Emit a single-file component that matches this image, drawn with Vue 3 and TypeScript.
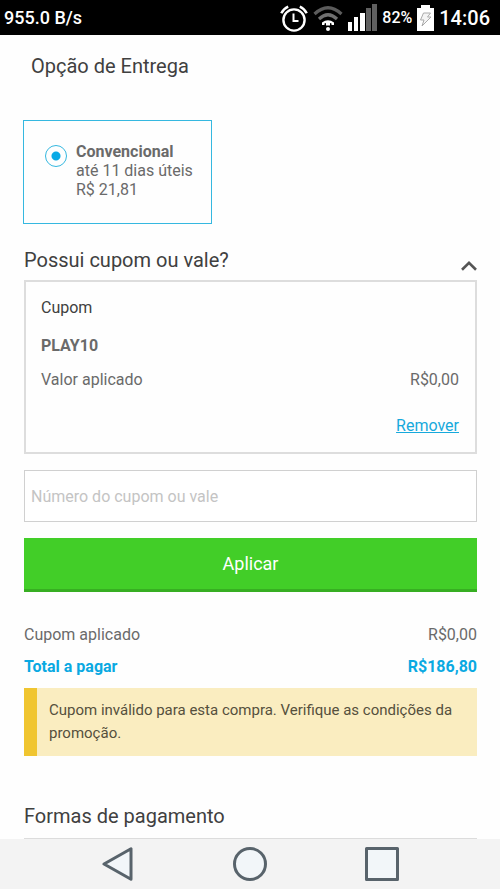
<script setup lang="ts">
import { ref } from 'vue'

const transferRate = '955.0 B/s'
const battery = '82%'
const clock = '14:06'

const delivery = ref('convencional')
const couponOpen = ref(true)
const applied = ref<{ code: string; value: string } | null>({ code: 'PLAY10', value: 'R$0,00' })
const couponInput = ref('')
</script>

<template>
  <div class="screen">
    <header class="status">
      <span class="rate">{{ transferRate }}</span>
      <div class="indicators">
        <svg class="alarm" width="28" height="28" viewBox="0 0 28 28" fill="none" stroke="#fff" aria-hidden="true">
          <circle cx="14" cy="16" r="10.6" stroke-width="2.4" />
          <path d="M13.5 9.5v7.500h5" stroke-width="2" />
          <path d="M1.3 9.200Q3.5 4.600 8.2 2.600M26.7 9.200Q24.5 4.600 19.8 2.600" stroke-width="2.5" />
        </svg>
        <svg class="wifi" width="30" height="26" viewBox="0 0 30 26" fill="none" aria-hidden="true">
          <path d="M1.5 9Q15-3.500 28.5 9" stroke="#5c5c5c" stroke-width="3.2" />
          <path d="M6 14Q15 5.500 24 14" stroke="#707070" stroke-width="3.2" />
          <path d="M9 17.500Q15 13 21 17.500V20h-2.500v-1.500L17 18v2.500h-4V18l-1.500.5V20H9z" fill="#fff" />
          <circle cx="15" cy="24" r="2" fill="#fff" />
        </svg>
        <svg class="signal" width="29" height="27" viewBox="0 0 29 27" aria-hidden="true">
          <path d="M0 18h4v9H0zM6 13h4v14H6zM12 9h5v18h-5z" fill="#fff" />
          <path d="M18 4h5v23h-5zM24 0h5v27h-5z" fill="#606060" />
        </svg>
        <span class="battery-level">{{ battery }}</span>
        <svg class="battery" width="17" height="26" viewBox="0 0 17 26" aria-hidden="true">
          <path d="M4 0h9v3h4v23H0V3h4z" fill="#fff" />
          <path d="M6.5 8h7l-3 4h3.500L5 21l2-6H3.500z" fill="#f4f4f4" stroke="#aaa" />
        </svg>
        <span class="clock">{{ clock }}</span>
      </div>
    </header>

    <main class="content">
      <section class="delivery">
        <h2 class="title inset">Opção de Entrega</h2>
        <label class="option">
          <input v-model="delivery" class="radio" type="radio" name="entrega" value="convencional" />
          <span class="option-text">
            <strong>Convencional</strong>
            <span>até 11 dias úteis</span>
            <span>R$ 21,81</span>
          </span>
        </label>
      </section>

      <section class="coupon">
        <div class="coupon-head">
          <h2 class="title">Possui cupom ou vale?</h2>
          <button class="toggle" type="button" aria-label="Cupom ou vale" :aria-expanded="couponOpen" @click="couponOpen = !couponOpen">
            <svg width="16" height="10" viewBox="0 0 16 10" fill="none" stroke="#555" stroke-width="2.6" aria-hidden="true">
              <path d="M1 8.8L8 1.9l7 6.9" />
            </svg>
          </button>
        </div>
        <template v-if="couponOpen">
          <div v-if="applied" class="applied">
            <h3 class="applied-title">Cupom</h3>
            <strong class="code">{{ applied.code }}</strong>
            <div class="row">
              <span>Valor aplicado</span>
              <span>{{ applied.value }}</span>
            </div>
            <a class="remove" href="#" @click.prevent="applied = null">Remover</a>
          </div>
          <form class="coupon-form" @submit.prevent>
            <input v-model="couponInput" class="field" type="text" aria-label="Número do cupom ou vale" placeholder="Número do cupom ou vale" />
            <button class="apply" type="submit">Aplicar</button>
          </form>
        </template>
      </section>

      <section class="summary">
        <div class="row">
          <span>Cupom aplicado</span>
          <span>R$0,00</span>
        </div>
        <div class="row total">
          <span>Total a pagar</span>
          <span>R$186,80</span>
        </div>
        <p class="warning" role="alert">Cupom inválido para esta compra. Verifique as condições da promoção.</p>
      </section>

      <section class="payment">
        <h2 class="title">Formas de pagamento</h2>
      </section>
    </main>

    <nav class="system-nav">
      <button type="button" aria-label="Voltar">
        <svg width="34" height="34" viewBox="0 0 34 34"><path d="M3 17L30 1.7v30.6z" /></svg>
      </button>
      <button type="button" aria-label="Início">
        <svg width="34" height="34" viewBox="0 0 34 34"><circle cx="17" cy="17" r="15.5" /></svg>
      </button>
      <button type="button" aria-label="Recentes">
        <svg width="34" height="34" viewBox="0 0 34 34"><path d="M1.5 1.5h31v31h-31z" /></svg>
      </button>
    </nav>
  </div>
</template>

<style>
body {
  margin: 0;
  background: #fefefe;
}
</style>

<style scoped>
.screen {
  display: flex;
  flex-direction: column;
  min-height: 100vh;
  box-sizing: border-box;
  font-family: Roboto, "Liberation Sans", sans-serif;
  font-size: 16px;
  line-height: 20px;
  color: #6a6a6a;
}

.status {
  display: flex;
  align-items: center;
  justify-content: space-between;
  height: 35px;
  padding: 0 10px 0 4px;
  background: #000;
  color: #fff;
  font-weight: 500;
}

.rate {
  font-size: 18px;
}

.indicators {
  display: flex;
  align-items: center;
  gap: 5px;
}

.battery-level {
  font-size: 16px;
}

.clock {
  font-size: 20px;
}

.content {
  flex: 1;
  display: flex;
  flex-direction: column;
  padding: 17px 23px 0 24px;
}

.title {
  margin: 0;
  font-size: 20px;
  line-height: 28px;
  font-weight: 400;
  color: #404040;
}

.inset {
  padding-left: 7px;
}

.delivery {
  display: flex;
  flex-direction: column;
  align-items: flex-start;
  gap: 40px;
}

.option {
  display: flex;
  gap: 9px;
  box-sizing: border-box;
  min-width: 188px;
  min-height: 104px;
  margin-left: -1px;
  padding: 21px 18px 21px 21px;
  border: 1px solid #35b8e0;
}

.radio {
  appearance: none;
  flex: none;
  width: 22px;
  height: 22px;
  margin: 3px 0 0;
  border: 1px solid #35b8e0;
  border-radius: 50%;
}

.radio:checked {
  background: radial-gradient(circle, #0aaae6 0 4px, transparent 5px);
}

.option-text {
  display: flex;
  flex-direction: column;
  line-height: 19px;
}

.coupon {
  padding-top: 22px;
}

.coupon-head {
  display: flex;
  align-items: center;
  justify-content: space-between;
  height: 34px;
}

.coupon-head .title {
  padding-bottom: 6px;
}

.toggle {
  display: flex;
  padding: 6px 0 0;
  border: 0;
  background: none;
}

.applied {
  display: flex;
  flex-direction: column;
  padding: 16px 16px 16px 15px;
  border: 2px solid #ddd;
}

.applied-title {
  margin: 0 0 18px;
  font-size: 16px;
  line-height: 20px;
  font-weight: 400;
  color: #404040;
}

.code {
  margin-bottom: 14px;
}

.row {
  display: flex;
  justify-content: space-between;
}

.remove {
  align-self: flex-end;
  margin-top: 26px;
  color: #17a9dc;
}

.coupon-form {
  display: flex;
  flex-direction: column;
  gap: 16px;
  padding-top: 16px;
}

.field {
  box-sizing: border-box;
  width: 100%;
  height: 52px;
  padding: 0 6px;
  border: 1px solid #d0d0d0;
  border-radius: 0;
  background: #fff;
  font: inherit;
}

.field::placeholder {
  color: #c4c4c4;
  opacity: 1;
}

.apply {
  height: 54px;
  padding: 0;
  border: 0;
  border-bottom: 3px solid #37ae22;
  background: #42ce28;
  color: #fff;
  font: inherit;
  font-size: 18px;
}

.summary {
  padding-top: 33px;
}

.total {
  padding-top: 12px;
  font-weight: 700;
  color: #0aa9e2;
}

.warning {
  margin: 11px 0 0;
  padding: 11px 6px 11px 12px;
  border-left: 13px solid #f0c530;
  background: #faedc0;
  color: #55503d;
  font-size: 15px;
  line-height: 23px;
}

.payment {
  padding: 46px 0 8px;
  border-bottom: 1px solid #dcdcdc;
}

.system-nav {
  display: flex;
  align-items: center;
  justify-content: center;
  gap: 98px;
  height: 50px;
  background: #f3f3f3;
}

.system-nav button {
  display: flex;
  padding: 0;
  border: 0;
  background: none;
}

.system-nav svg {
  fill: #f2f6f9;
  stroke: #58636b;
  stroke-width: 3;
  stroke-linejoin: round;
}
</style>
